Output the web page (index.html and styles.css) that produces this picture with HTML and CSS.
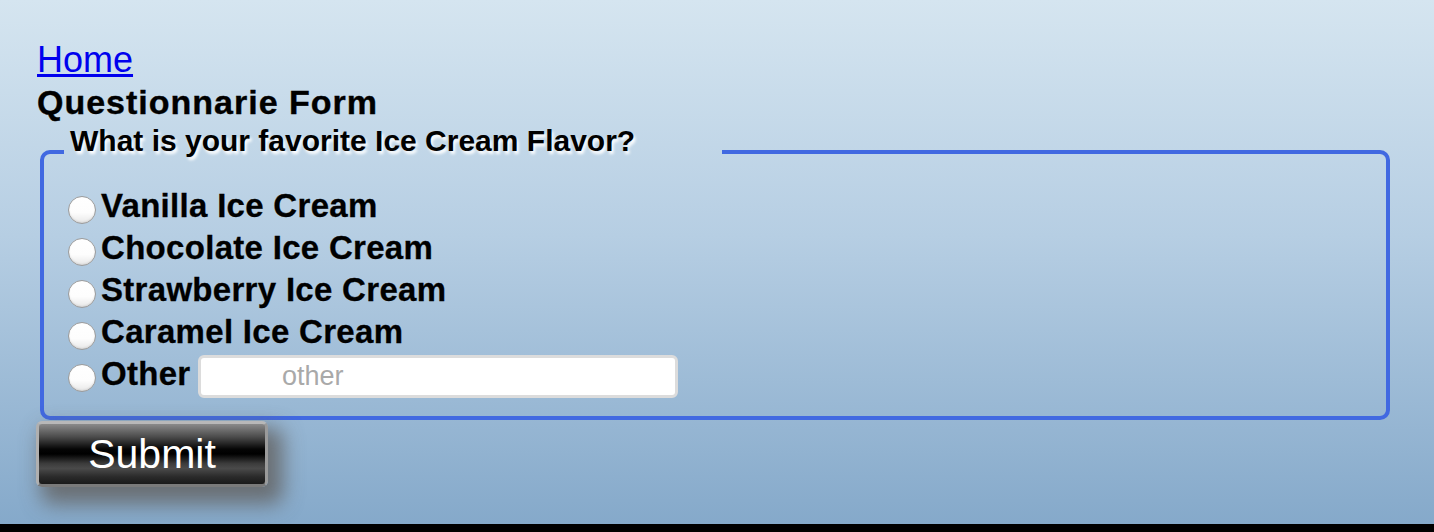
FILE: index.html
```html
<!DOCTYPE html>
<html lang="en">
<head>
<meta charset="utf-8">
<title>Questionnarie Form</title>
<link rel="stylesheet" href="styles.css">
</head>
<body>
<div class="page">
  <a class="home" href="#">Home</a>
  <div class="title">Questionnarie Form</div>
  <form class="form">
    <fieldset class="group">
      <legend class="question">What is your favorite Ice Cream Flavor?</legend>
      <div class="option"><input class="radio" type="radio" name="flavor" id="f1"><label for="f1">Vanilla Ice Cream</label></div>
      <div class="option"><input class="radio" type="radio" name="flavor" id="f2"><label for="f2">Chocolate Ice Cream</label></div>
      <div class="option"><input class="radio" type="radio" name="flavor" id="f3"><label for="f3">Strawberry Ice Cream</label></div>
      <div class="option"><input class="radio" type="radio" name="flavor" id="f4"><label for="f4">Caramel Ice Cream</label></div>
      <div class="option"><input class="radio" type="radio" name="flavor" id="f5"><label for="f5">Other</label> <input class="other" type="text" placeholder="other"></div>
    </fieldset>
    <button class="submit" type="submit">Submit</button>
  </form>
</div>
</body>
</html>
```

FILE: styles.css
```css
html {
  background: #000;
}
body {
  margin: 0;
  font-family: "Liberation Sans", Arial, Helvetica, sans-serif;
}
.page {
  box-sizing: border-box;
  height: 524px;
  padding: 39px 0 0 37px;
  background: linear-gradient(to bottom, #d5e5f0 0%, #b6cee3 45%, #85a9ca 100%);
}
.home {
  display: block;
  width: max-content;
  font-size: 36px;
  color: #0000ee;
  text-decoration: underline;
}
.title {
  margin-top: 2px;
  font-size: 34px;
  font-weight: bold;
  letter-spacing: 1px;
  color: #000;
  -webkit-text-stroke: 0.4px #000;
}
.form {
  margin: 0;
}
.group {
  box-sizing: border-box;
  width: 1350px;
  margin: 2px 0 0 3px;
  padding: 5px 20px 21px 20px;
  border: 4px solid #4169e1;
  border-radius: 10px;
  min-width: 0;
}
.question {
  box-sizing: border-box;
  width: 658px;
  padding: 0 4px 22px 6px;
  font-size: 30px;
  font-weight: bold;
  color: #000;
  text-shadow: 2px 3px 3px #fff;
}
.option {
  height: 42px;
  line-height: 42px;
  font-size: 33px;
  font-weight: bold;
  letter-spacing: 0.3px;
  white-space: nowrap;
  -webkit-text-stroke: 0.3px #000;
}
.radio {
  appearance: none;
  -webkit-appearance: none;
  box-sizing: border-box;
  width: 28px;
  height: 28px;
  margin: 0 5px 0 4px;
  vertical-align: -7px;
  border: 1px solid #9c9c9c;
  border-radius: 50%;
  background: linear-gradient(to bottom, #ffffff 0%, #fdfdfd 60%, #e8e8e8 100%);
  box-shadow: inset 0 -1px 2px rgba(0, 0, 0, 0.1);
}
.other {
  box-sizing: border-box;
  width: 480px;
  height: 43px;
  margin: 0 0 0 -2px;
  padding: 0 0 0 81px;
  border: 3px solid #dcdcdc;
  border-radius: 6px;
  background: #fff;
  font-family: "Liberation Sans", Arial, Helvetica, sans-serif;
  font-size: 27px;
  letter-spacing: 0;
  font-weight: normal;
  color: #000;
  outline: none;
  -webkit-text-stroke: 0;
}
.other::placeholder {
  color: #a9a9a9;
}
.submit {
  display: block;
  box-sizing: border-box;
  width: 232px;
  height: 66px;
  margin: 1px 0 0 -1px;
  padding: 0;
  border: 3px solid;
  border-color: #b8b8b8 #9a9a9a #7a7a7a #b0b0b0;
  border-radius: 6px;
  background: linear-gradient(to bottom, #8a8a8a 0%, #4a4a4a 22%, #050505 42%, #000 50%, #3c3c3c 66%, #4a4a4a 74%, #2a2a2a 88%, #1a1a1a 100%);
  box-shadow: 10px 12px 20px 5px rgba(100, 100, 100, 0.85);
  color: #fff;
  font-family: "Liberation Sans", Arial, Helvetica, sans-serif;
  font-size: 41px;
  line-height: 46px;
}
```
